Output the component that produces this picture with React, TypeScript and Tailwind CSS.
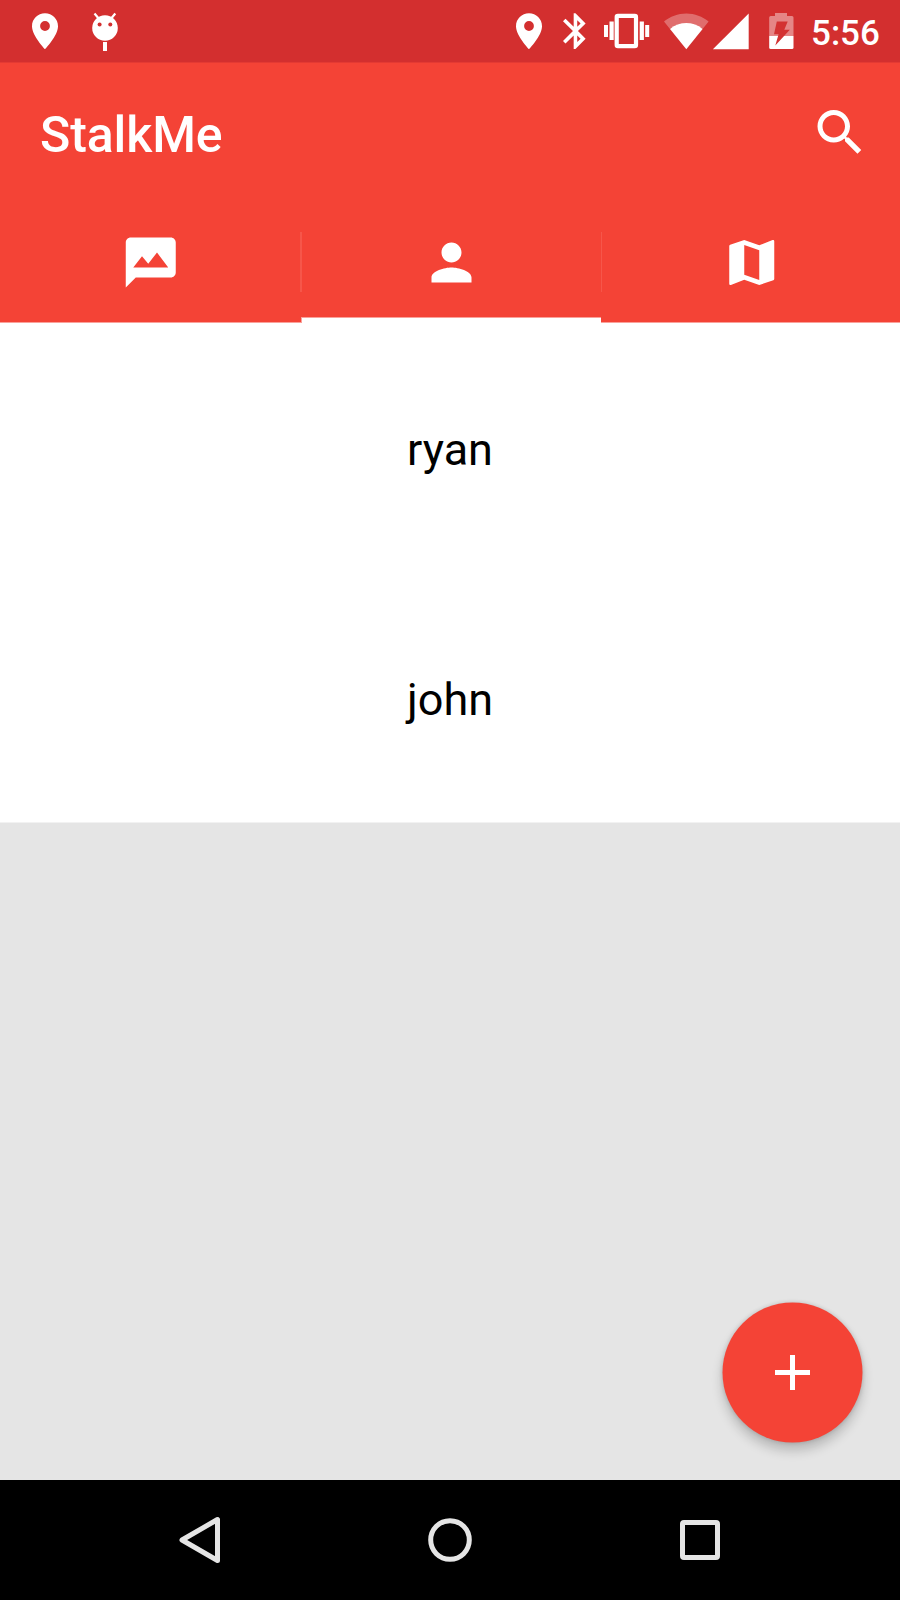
import React from 'react';

const PIN =
  'M13 13.300C5.800 13.300 0 19 0 26.200 0 35.800 13 49.200 13 49.200S26 35.800 26 26.200C26 19 20.200 13.300 13 13.300Zm0 17.600a4.900 4.900 0 1 1 0-9.800 4.900 4.900 0 0 1 0 9.800Z';

function PinIcon() {
  return (
    <svg className="h-[62px] w-[26px]" viewBox="0 0 26 62" fill="white">
      <path d={PIN} />
    </svg>
  );
}

function StatusBar() {
  return (
    <div className="flex h-[63px] shrink-0 items-start border-b border-[#e43a33] bg-[#d32f2f] pl-8 pr-[19px]">
      <PinIcon />
      <svg className="ml-[34px] h-[62px] w-[26px]" viewBox="92 0 26 62" fill="white">
        <path d="M94.500 13.500l4.600 5.500M115.300 13.500l-4.600 5.500" stroke="white" strokeWidth="2.200" />
        <circle cx="105" cy="28" r="12.800" />
        <path d="M103 42h4v9h-4z" />
        <circle cx="99.600" cy="24.500" r="2" fill="#d32f2f" />
        <circle cx="110.300" cy="24.500" r="2" fill="#d32f2f" />
      </svg>
      <div className="ml-auto flex">
        <PinIcon />
        <svg className="ml-[21px] h-[62px] w-[23px]" viewBox="563 0 23 62" fill="white">
          <path
            transform="translate(554.1 9.75) scale(1.78)"
            d="M17.710 7.710L12 2h-1v7.590L6.410 5 5 6.410 10.590 12 5 17.590 6.410 19 11 14.410V22h1l5.710-5.710-4.300-4.290 4.300-4.290zM13 5.830l1.880 1.880L13 9.590V5.830zm1.880 10.460L13 18.170v-3.760l1.880 1.880z"
          />
        </svg>
        <svg className="ml-[17px] h-[62px] w-[47px]" viewBox="603 0 47 62" fill="white">
          <rect x="616.700" y="15.800" width="19.300" height="30.300" rx="1.200" fill="none" stroke="white" strokeWidth="4.200" />
          <path d="M604 25h4v12h-4zM609.500 21.500h4.200V40h-4.200zM639.700 21.500h4.200V40h-4.200zM645.200 25h4v12h-4z" />
        </svg>
        <svg className="ml-[14px] h-[62px] w-[45px]" viewBox="664 0 45 62" fill="white">
          <path d="M670 28.900L664 21.600C670 16.500 678 13.500 686.300 13.500S702.600 16.500 708.600 21.600L702.600 28.900C698.100 25 692.600 23 686.300 23S674.500 25 670 28.900Z" opacity="0.3" />
          <path d="M686.300 49.200L670 28.900C674.500 25 680 23 686.300 23S698.100 25 702.600 28.900Z" />
        </svg>
        <svg className="ml-[3px] h-[62px] w-[38px]" viewBox="712 0 38 62" fill="white">
          <path d="M712.900 49.200H748.700V13.500Z" />
        </svg>
        <svg className="ml-[19px] h-[62px] w-[25px]" viewBox="769 0 25 62" fill="white">
          <path d="M769.200 36V17.500q0-1.500 1.500-1.500H775v-3h12v3h5q1.500 0 1.500 1.500V36Z" opacity="0.42" />
          <path d="M769.200 36h24.300v11.500q0 1.500-1.500 1.500h-21.300q-1.500 0-1.500-1.500Z" />
          <path d="M776.800 21.500h10.900L784.300 29.800h5.500L775.300 45.600 778.600 34.200H774Z" fill="#d33232" />
        </svg>
        <span className="ml-[17px] mt-[13px] w-[70px] whitespace-nowrap text-[35px] leading-[41px] font-medium text-white">
          5:56
        </span>
      </div>
    </div>
  );
}

function AppBar() {
  return (
    <header className="flex h-[139px] shrink-0 items-start justify-between pl-[40px] pr-[30px]">
      <h1 className="mt-[43px] text-[50px] leading-[58px] font-medium tracking-[-0.1px] text-white">StalkMe</h1>
      <svg className="mt-[39px] size-[60px]" viewBox="0 -0.2 24 24" fill="white">
        <path d="M15.500 14h-.79l-.28-.27C15.410 12.590 16 11.110 16 9.500 16 5.910 13.090 3 9.500 3S3 5.910 3 9.500 5.910 16 9.500 16c1.610 0 3.090-.59 4.230-1.570l.27.28v.79l5 4.990L20.490 19l-4.990-5zm-6 0C7.010 14 5 11.990 5 9.500S7.010 5 9.500 5 14 7.010 14 9.500 11.990 14 9.500 14z" />
      </svg>
    </header>
  );
}

const TABS = [
  {
    name: 'feed',
    viewBox: '-0.3 -0.2 24 24',
    path: 'M20 2H4c-1.100 0-1.990.9-1.990 2L2 22l4-4h14c1.100 0 2-.9 2-2V4c0-1.100-.9-2-2-2zM5 14l3.500-4.500 2.500 3.010L14.500 8l4.500 6H5z',
  },
  {
    name: 'friends',
    viewBox: '0.2 -0.2 24 24',
    path: 'M12 12c2.210 0 4-1.790 4-4s-1.790-4-4-4-4 1.790-4 4 1.790 4 4 4zm0 2c-2.670 0-8 1.340-8 4v2h16v-2c0-2.660-5.330-4-8-4z',
  },
  {
    name: 'map',
    viewBox: '-0.3 -0.2 24 24',
    path: 'M20.500 3l-.16.03L15 5.100 9 3 3.360 4.900c-.21.07-.36.25-.36.48V20.500c0 .28.22.5.5.5l.16-.03L9 18.900l6 2.100 5.640-1.900c.21-.07.36-.25.36-.48V3.500c0-.28-.22-.5-.5-.5zM15 19l-6-2.110V5l6 2.110V19z',
  },
];

function Tabs({ active }: { active: string }) {
  return (
    <nav className="grid h-[121px] shrink-0 grid-cols-[301px_300px_299px]">
      {TABS.map((tab, i) => (
        <div key={tab.name} className="flex flex-col">
          <div className="flex h-[115px] items-start">
            {i > 0 && <div className="mt-[30px] h-[60px] w-px bg-[#f6564a]" />}
            <div className="flex flex-1 justify-center pt-[30px]">
              <svg className="size-[60px]" viewBox={tab.viewBox} fill="white">
                <path d={tab.path} />
              </svg>
            </div>
            {i === 0 && <div className="mt-[30px] h-[60px] w-px bg-[#f6564a]" />}
          </div>
          <div
            className={
              tab.name === active
                ? 'h-[6px] border-t border-l border-[#faa19a] bg-white'
                : 'h-[6px] border-b border-[#faa19a]'
            }
          />
        </div>
      ))}
    </nav>
  );
}

function NavigationBar() {
  return (
    <div className="flex h-[120px] shrink-0 items-center justify-center gap-[190px] bg-black">
      <svg className="size-[60px]" viewBox="0 0 60 60" fill="none" stroke="#e5e5e5" strokeWidth="5" strokeLinejoin="round">
        <path d="M12 30L47.500 9.500V50.500Z" />
      </svg>
      <svg className="size-[60px]" viewBox="0 0 60 60" fill="none" stroke="#e5e5e5" strokeWidth="5">
        <circle cx="30" cy="30" r="19.300" />
      </svg>
      <svg className="size-[60px]" viewBox="0 0 60 60" fill="none" stroke="#e5e5e5" strokeWidth="5">
        <rect x="12.500" y="12.500" width="35" height="35" rx="1.500" />
      </svg>
    </div>
  );
}

export default function App() {
  return (
    <div className="flex h-[1600px] w-[900px] flex-col overflow-hidden bg-[#e5e5e5] font-[Roboto,sans-serif]">
      <StatusBar />
      <div className="flex shrink-0 flex-col bg-[#f44336]">
        <AppBar />
        <Tabs active="friends" />
      </div>
      <ul className="shrink-0 border-b border-[#f2f2f2] bg-white text-[45px] leading-[53px] text-black">
        <li className="flex h-[250px] items-center justify-center pt-[2px]">ryan</li>
        <li className="flex h-[249px] items-center justify-center pt-[4px]">john</li>
      </ul>
      <main className="flex flex-1 items-end justify-end pb-[38px] pr-[38px]">
        <button
          aria-label="Add"
          className="flex size-[140px] translate-x-[0.5px] translate-y-[0.5px] items-center justify-center rounded-full bg-[#f44336] shadow-[0_8px_12px_rgba(0,0,0,0.2),0_0_4px_rgba(0,0,0,0.16)]"
        >
          <svg className="size-[60px]" viewBox="0 0 24 24" fill="white">
            <path d="M19 13h-6v6h-2v-6H5v-2h6V5h2v6h6v2z" />
          </svg>
        </button>
      </main>
      <NavigationBar />
    </div>
  );
}
